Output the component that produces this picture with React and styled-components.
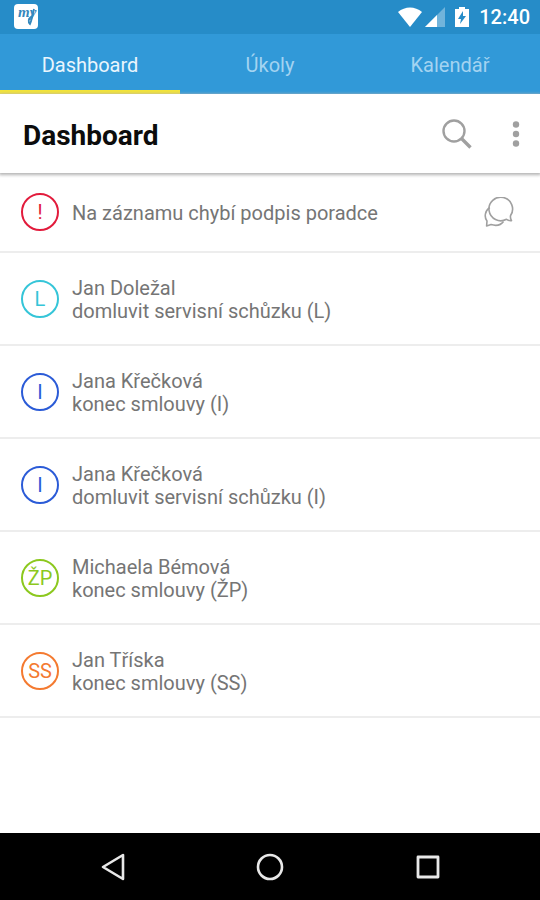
import React, { useState } from 'react';
import styled, { createGlobalStyle } from 'styled-components';


const GlobalStyle = createGlobalStyle`
    *{
        box-sizing: border-box;
    }
    body{
        margin: 0;
        background-color: #fff;
        font-family: Roboto, "Noto Sans", sans-serif;
    }
    button{
        border: none;
        padding: 0;
        background: none;
        font-family: inherit;
        cursor: pointer;
    }
    svg{
        display: block;
    }
`
const Screen = styled.div`
    min-height: 100vh;
    display: flex;
    flex-direction: column;
`
const StatusBar = styled.div`
    height: 34px;
    padding: 0 10px 0 14px;
    display: flex;
    align-items: center;
    justify-content: space-between;
    background-color: #268cc8;
    color: #fff;
`
const StatusIcons = styled.div`
    display: flex;
    align-items: center;
    gap: 2px;
`
const Clock = styled.span`
    margin-left: 2px;
    font-size: 20px;
    line-height: 24px;
    font-weight: 500;
`
const Tabs = styled.nav`
    height: 60px;
    display: grid;
    grid-template-columns: repeat(3, 1fr);
    background-color: #3199d8;
`
const Tab = styled.button`
    border-bottom: 4px solid ${({ $active }) => ($active ? '#f2e33a' : 'transparent')};
    padding-top: 6px;
    font-size: 20px;
    line-height: 24px;
    color: ${({ $active }) => ($active ? '#e9f5fd' : '#a3d3f1')};
`
const Header = styled.header`
    height: 79px;
    padding: 0 14px 0 23px;
    display: flex;
    align-items: center;
    position: relative;
    background-color: #fff;
    box-shadow: 0 1px 3px 1px #b4b4b4;

    h1{
        flex: 1;
        margin: 0;
        padding-top: 4px;
        font-size: 28px;
        line-height: 32px;
        font-weight: 700;
        color: #0c0c0c;
    }
`
const IconButton = styled.button`
    color: #a0a0a0;
`
const HeaderActions = styled.div`
    display: flex;
    align-items: center;
    gap: 34px;
`
const List = styled.ul`
    flex: 1;
    margin: 0;
    padding: 0;
    list-style: none;
`
const Row = styled.li`
    height: ${({ $single }) => ($single ? '80px' : '93px')};
    padding: 0 26px 0 21px;
    display: flex;
    align-items: center;
    border-bottom: 2px solid #ededed;
`
const Badge = styled.span`
    flex: none;
    width: 38px;
    height: 38px;
    margin-right: 13px;
    display: flex;
    align-items: center;
    justify-content: center;
    border: 2px solid ${({ $color }) => $color};
    border-radius: 50%;
    font-size: 20px;
    line-height: 24px;
    color: ${({ $color }) => $color};
`
const RowText = styled.div`
    flex: 1;
    padding-top: 2px;
    font-size: 20px;
    line-height: 23px;
    color: #757575;

    p{
        margin: 0;
    }
`
const SystemBar = styled.nav`
    height: 67px;
    padding: 0 33px;
    display: grid;
    grid-template-columns: repeat(3, 1fr);
    background-color: #000;
`
const SystemButton = styled.button`
    display: flex;
    align-items: center;
    justify-content: center;
    color: #e8e8e8;
`

const AppLogo = () => (
    <svg width="24" height="26" viewBox="0 0 24 26" aria-hidden="true">
        <rect width="24" height="25" y="0" rx="4" fill="#fff" />
        <text x="4" y="13" fontFamily="Liberation Serif, serif" fontStyle="italic" fontWeight="700" fontSize="15" fill="#3488bd">my</text>
        <path d="M20 5 C19 10 18 15 16 20 C14 18 14 15 18 12" fill="none" stroke="#3488bd" strokeWidth="1.8" />
    </svg>
);

const WifiIcon = () => (
    <svg width="26" height="22" viewBox="0 0 26 22" fill="currentColor" aria-hidden="true">
        <path d="M1 6 C8 0 18 0 25 6 L13 21 Z" />
    </svg>
);

const SignalIcon = () => (
    <svg width="20" height="22" viewBox="0 0 20 22" fill="currentColor" aria-hidden="true">
        <path d="M0 21 L20 1 V21 Z" opacity="0.35" />
        <path d="M0 21 L12 9 V21 Z" />
    </svg>
);

const BatteryIcon = () => (
    <svg width="28" height="22" viewBox="0 0 28 22" aria-hidden="true">
        <path d="M8 3 H12 V1 H18 V3 H22 V21 H8 Z" fill="#fff" />
        <path d="M16 5 L11 13 H14 L13 18 L19 10 H16 Z" fill="#268cc8" />
    </svg>
);

const SearchIcon = () => (
    <svg width="30" height="30" viewBox="0 0 30 30" fill="none" stroke="currentColor" aria-hidden="true">
        <circle cx="12" cy="12" r="10.5" strokeWidth="2.4" />
        <path d="M19.5 19.5 L28.5 28.5" strokeWidth="3.4" />
    </svg>
);

const MoreIcon = () => (
    <svg width="20" height="28" viewBox="0 0 20 28" fill="currentColor" aria-hidden="true">
        <circle cx="10" cy="4.5" r="3.2" />
        <circle cx="10" cy="14" r="3.2" />
        <circle cx="10" cy="23.5" r="3.2" />
    </svg>
);

const ChatIcon = () => (
    <svg width="30" height="30" viewBox="0 0 30 30" fill="none" stroke="currentColor" strokeWidth="1.6" strokeLinejoin="round" aria-hidden="true">
        <path d="M22.5 22.3 A11.8 11.8 0 1 1 26.6 18.5 Q26 21 27.5 23.6 Q25 24 22.5 22.3 Z" />
        <path d="M5.8 10.5 C0.5 14 0.2 20.5 3 24 L2.6 29 L7 27.6 C12 29 17 28 19.5 24.5" />
    </svg>
);

const items = [
    { id: 1, mark: '!', color: '#e21b3c', lines: ['Na záznamu chybí podpis poradce'], chat: true },
    { id: 2, mark: 'L', color: '#35c5d8', lines: ['Jan Doležal', 'domluvit servisní schůzku (L)'] },
    { id: 3, mark: 'I', color: '#2b5bd7', lines: ['Jana Křečková', 'konec smlouvy (I)'] },
    { id: 4, mark: 'I', color: '#2b5bd7', lines: ['Jana Křečková', 'domluvit servisní schůzku (I)'] },
    { id: 5, mark: 'ŽP', color: '#8cc81e', lines: ['Michaela Bémová', 'konec smlouvy (ŽP)'] },
    { id: 6, mark: 'SS', color: '#f47a30', lines: ['Jan Tříska', 'konec smlouvy (SS)'] },
];

const tabs = ['Dashboard', 'Úkoly', 'Kalendář'];

const App = () => {
    const [active, setActive] = useState('Dashboard');

    return (
        <Screen>
            <GlobalStyle />
            <StatusBar>
                <AppLogo />
                <StatusIcons>
                    <WifiIcon />
                    <SignalIcon />
                    <BatteryIcon />
                    <Clock>12:40</Clock>
                </StatusIcons>
            </StatusBar>
            <Tabs>
                {tabs.map((tab) => (
                    <Tab key={tab} type="button" $active={tab === active} onClick={() => setActive(tab)}>
                        {tab}
                    </Tab>
                ))}
            </Tabs>
            <Header>
                <h1>Dashboard</h1>
                <HeaderActions>
                    <IconButton type="button" aria-label="Hledat"><SearchIcon /></IconButton>
                    <IconButton type="button" aria-label="Více"><MoreIcon /></IconButton>
                </HeaderActions>
            </Header>
            <List>
                {items.map((item) => (
                    <Row key={item.id} $single={item.lines.length === 1}>
                        <Badge $color={item.color}>{item.mark}</Badge>
                        <RowText>
                            {item.lines.map((line) => <p key={line}>{line}</p>)}
                        </RowText>
                        {item.chat && (
                            <IconButton type="button" aria-label="Zprávy"><ChatIcon /></IconButton>
                        )}
                    </Row>
                ))}
            </List>
            <SystemBar>
                <SystemButton type="button" aria-label="Zpět">
                    <svg width="26" height="28" viewBox="0 0 26 28" fill="none" stroke="currentColor" strokeWidth="2.6" strokeLinejoin="round">
                        <path d="M24 2 V26 L4 14 Z" />
                    </svg>
                </SystemButton>
                <SystemButton type="button" aria-label="Domů">
                    <svg width="28" height="28" viewBox="0 0 28 28" fill="none" stroke="currentColor" strokeWidth="2.6">
                        <circle cx="14" cy="14" r="12" />
                    </svg>
                </SystemButton>
                <SystemButton type="button" aria-label="Přehled">
                    <svg width="24" height="24" viewBox="0 0 24 24" fill="none" stroke="currentColor" strokeWidth="2.8" strokeLinejoin="round">
                        <rect x="2" y="2" width="20" height="20" />
                    </svg>
                </SystemButton>
            </SystemBar>
        </Screen>
    );
};

export default App;
